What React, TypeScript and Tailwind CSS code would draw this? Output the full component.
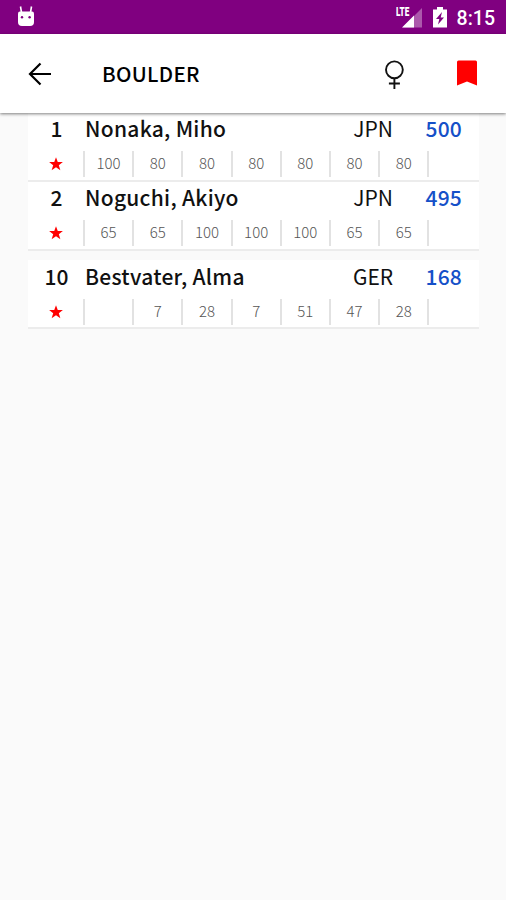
import React from 'react';

interface Athlete {
    rank: number;
    name: string;
    nation: string;
    total: number;
    points: (number | null)[];
    separated?: boolean;
}

const ATHLETES: Athlete[] = [
    { rank: 1, name: 'Nonaka, Miho', nation: 'JPN', total: 500, points: [100, 80, 80, 80, 80, 80, 80] },
    { rank: 2, name: 'Noguchi, Akiyo', nation: 'JPN', total: 495, points: [65, 65, 100, 100, 100, 65, 65] },
    { rank: 10, name: 'Bestvater, Alma', nation: 'GER', total: 168, points: [null, 7, 28, 7, 51, 47, 28], separated: true },
];

const StatusBar: React.FC = () => (
    <div className="flex h-[34px] items-center bg-[#800080] pr-[11px] pl-[17px] text-white">
        <svg width="18" height="22" viewBox="0 0 18 22" fill="currentColor" className="mb-[2px]">
            <path d="M3.5 1.5l1 6M14.5 1.5l-1 6" stroke="currentColor" strokeWidth="1.6" />
            <path d="M1 8.5Q1 6.5 3 6.5H15Q17 6.5 17 8.5V17Q17 21 13 21H5Q1 21 1 17Z" />
            <circle cx="5" cy="12.3" r="1.2" fill="#800080" />
            <circle cx="12.6" cy="12.3" r="1.2" fill="#800080" />
        </svg>
        <div className="relative ml-auto h-[22px] w-[27px]">
            <svg width="27" height="22" viewBox="0 0 27 22">
                <path d="M26 2V21.5H6.5Z" fill="#fff" opacity="0.35" />
                <path d="M18 9.5V21.5H6Z" fill="#fff" />
            </svg>
            <span className="absolute top-[1px] left-0 origin-left scale-x-[0.68] font-['Roboto'] text-[12px] leading-[11px] font-black">LTE</span>
        </div>
        <svg width="14" height="22" viewBox="0 0 14 22" className="ml-[10px]">
            <path d="M0 3.5H4V1H10V3.5H14V21.5H0Z" fill="#fff" />
            <path d="M9 6L3 13H6.3L5 18.5L11 11.5H7.7Z" fill="#800080" />
        </svg>
        <span className="ml-[9px] w-[39px] pt-[3px] text-right font-['Roboto'] text-[19.5px] leading-[22px] font-medium whitespace-nowrap">8:15</span>
    </div>
);

const TopBar: React.FC = () => (
    <header className="relative z-10 flex h-[79px] items-center bg-white pr-[29px] pl-[28px] shadow-[0_1px_3px_rgba(0,0,0,0.5)]">
        <svg width="24" height="24" viewBox="0 0 24 24" fill="none" stroke="#000" strokeWidth="2.2">
            <path d="M23 12H2.5M12.5 1.5L2 12l10.5 10.5" />
        </svg>
        <h1 className="mb-[2px] ml-[50px] text-[20.5px] leading-[28px] font-medium tracking-[0.3px] text-black">BOULDER</h1>
        <svg width="20" height="30" viewBox="0 0 20 30" fill="none" stroke="#111" strokeWidth="1.9" className="mt-[3px] mr-px ml-auto">
            <circle cx="10.4" cy="9.8" r="8.4" />
            <path d="M10.4 18v11M4.9 23.5h11" />
        </svg>
        <svg width="20" height="26" viewBox="0 0 20 26" className="mb-px ml-[52px]">
            <path d="M0 2Q0 .5 1.5 .5H18.5Q20 .5 20 2V25.5L10 21.5L0 25.5Z" fill="#f00" />
        </svg>
    </header>
);

const AthleteRow: React.FC<{ athlete: Athlete }> = ({ athlete }) => (
    <li className={athlete.separated ? 'mt-[9px] h-[69px] border-b-2 border-[#ececec] bg-white pt-px' : 'h-[69px] border-b-2 border-[#ececec] bg-white'}>
        <div className="flex h-[31px] items-center text-[21px] leading-[31px]">
            <span className="w-[57px] text-center font-medium">{athlete.rank}</span>
            <span className="flex-1 font-medium tracking-[0.28px]">{athlete.name}</span>
            <span className="w-[50px] text-center">{athlete.nation}</span>
            <span className="ml-[24px] w-[57px] pr-[17px] text-right font-medium tracking-[0.2px] text-[#1550c8]">{athlete.total}</span>
        </div>
        <div className={athlete.separated ? 'mt-[6px] flex h-[27px] items-center' : 'mt-[7px] flex h-[26px] items-center'}>
            <span className="flex w-[55px] justify-center pl-px">
                <svg width="14" height="14" viewBox="0 0 24 24" fill="#f00">
                    <path d="M12 .5l3 8.2h8.8l-7 5.4 2.7 8.4-7.5-5-7.5 5 2.7-8.4-7-5.4h8.8z" />
                </svg>
            </span>
            {athlete.points.map((p, i) => (
                <span key={i} className="h-[26px] w-[49.2px] border-l-2 border-[#e2e2e2] text-center text-[15px] leading-[24px] font-light text-[#555]">
                    {p}
                </span>
            ))}
            <span className="h-[26px] border-l-2 border-[#e2e2e2]" />
        </div>
    </li>
);

export default function App() {
    return (
        <div className="h-[900px] w-[506px] overflow-hidden bg-[#fafafa] font-['Noto_Sans_CJK_JP',sans-serif] text-[#111]">
            <StatusBar />
            <TopBar />
            <ul className="mr-[27px] ml-[28px]">
                {ATHLETES.map(a => <AthleteRow key={a.rank} athlete={a} />)}
            </ul>
        </div>
    );
}
